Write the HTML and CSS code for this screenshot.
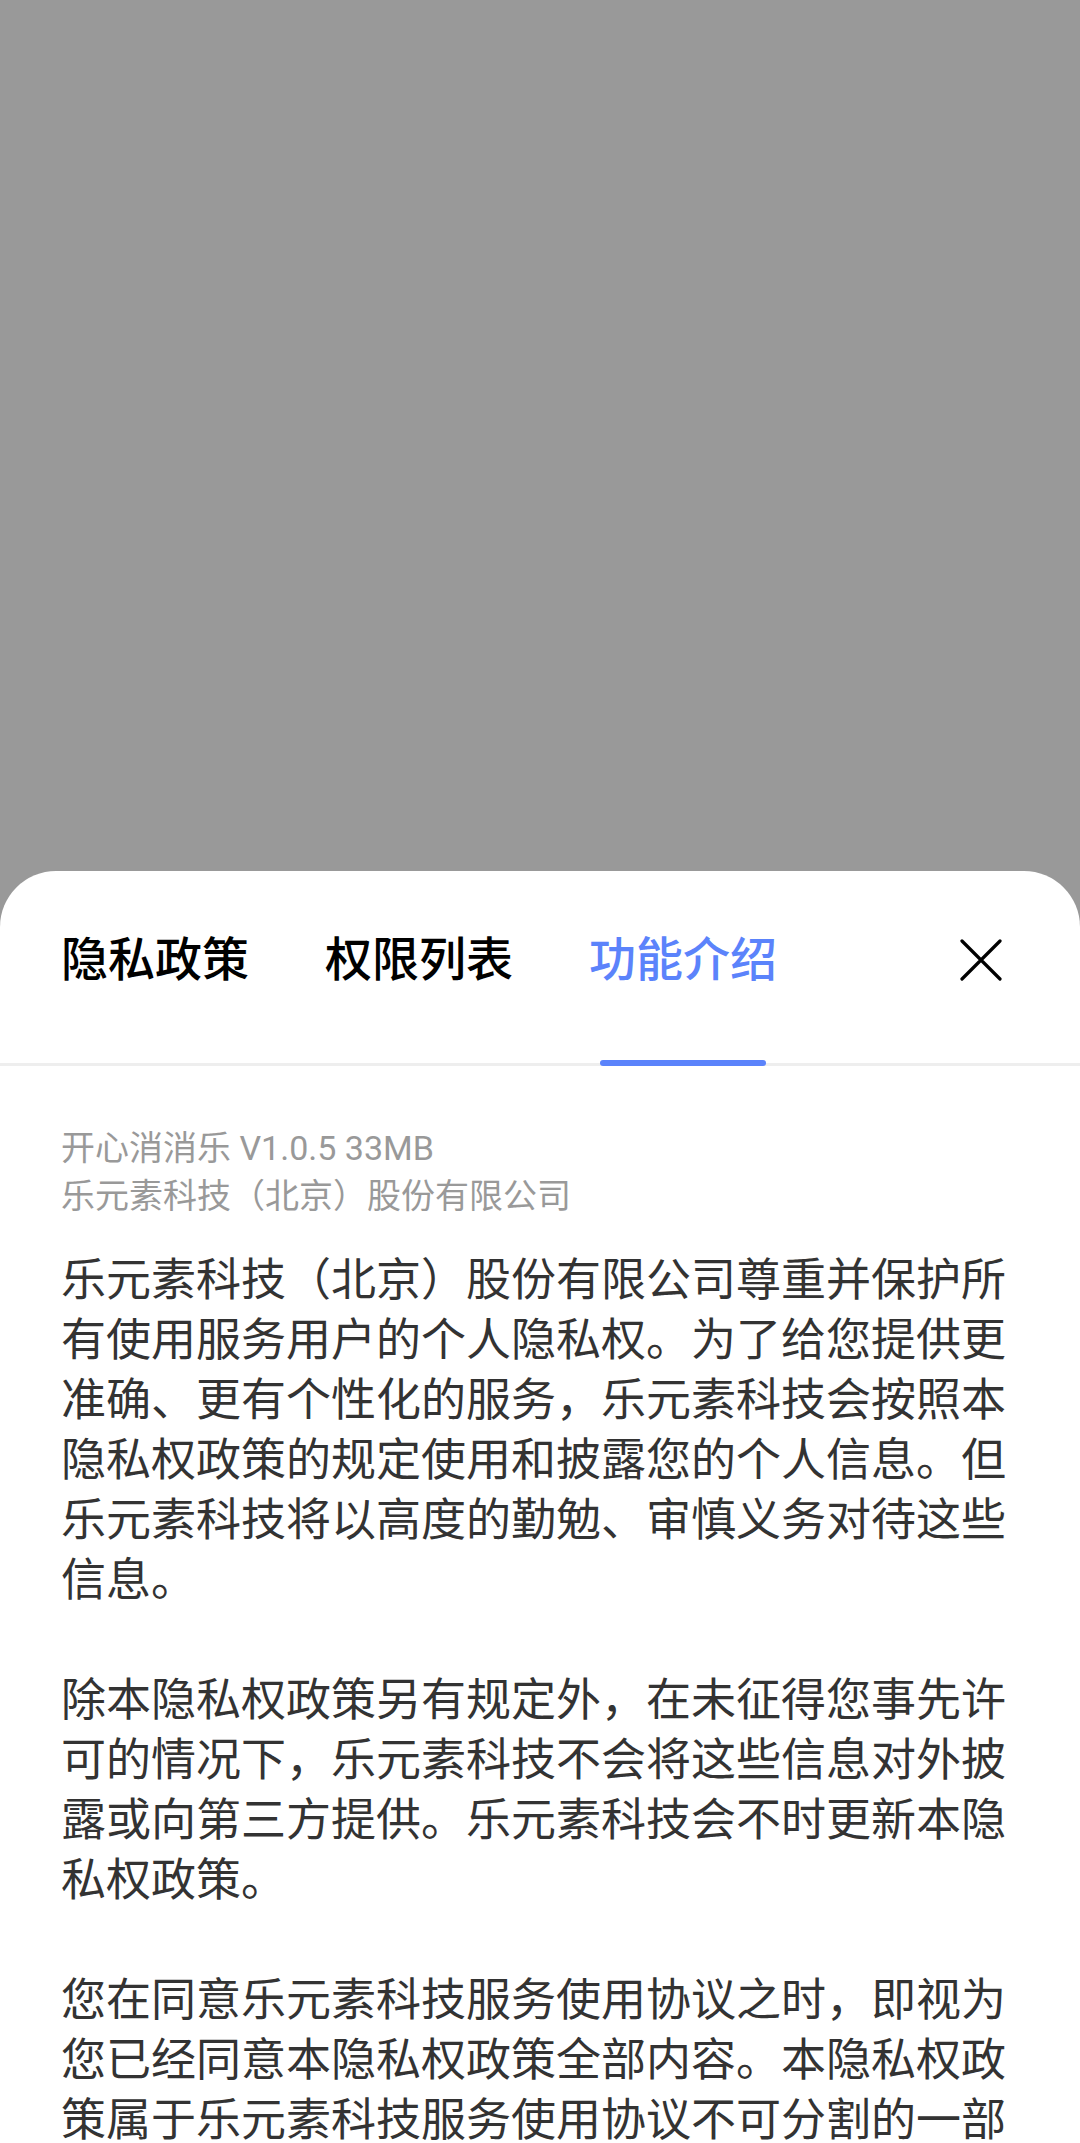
FILE: index.html
```html
<!DOCTYPE html>
<html lang="zh-CN">
<head>
  <meta charset="UTF-8">
  <meta name="viewport" content="width=device-width, initial-scale=1.0">
  <title>功能介绍</title>
  <link rel="stylesheet" href="styles.css">
</head>
<body>
  <div class="backdrop"></div>

  <div class="sheet">
    <div class="tab-bar">
      <div class="tab">隐私政策</div>
      <div class="tab">权限列表</div>
      <div class="tab active">功能介绍</div>
      <button class="close-btn" aria-label="关闭">
        <svg width="42" height="42" viewBox="0 0 42 42">
          <path d="M2 2 L40 40 M40 2 L2 40" stroke="#000" stroke-width="3.2" stroke-linecap="round" fill="none"/>
        </svg>
      </button>
    </div>

    <div class="content">
      <div class="app-info">
        <div>开心消消乐 V1.0.5 33MB</div>
        <div>乐元素科技（北京）股份有限公司</div>
      </div>

      <div class="policy">
        <p>乐元素科技（北京）股份有限公司尊重并保护所有使用服务用户的个人隐私权。为了给您提供更准确、更有个性化的服务，乐元素科技会按照本隐私权政策的规定使用和披露您的个人信息。但乐元素科技将以高度的勤勉、审慎义务对待这些信息。</p>
        <p>除本隐私权政策另有规定外，在未征得您事先许可的情况下，乐元素科技不会将这些信息对外披露或向第三方提供。乐元素科技会不时更新本隐私权政策。</p>
        <p>您在同意乐元素科技服务使用协议之时，即视为您已经同意本隐私权政策全部内容。本隐私权政策属于乐元素科技服务使用协议不可分割的一部分。</p>
      </div>
    </div>
  </div>
</body>
</html>
```

FILE: styles.css
```css
/* Page: dimmed backdrop with a bottom sheet */
body {
  margin: 0;
  padding: 0;
  height: 100vh;
  overflow: hidden;
  display: flex;
  flex-direction: column;
  background-color: #999999;
  font-family: Roboto, "Noto Sans CJK SC", sans-serif;
  color: #333;
}

.backdrop {
  flex: 0 0 871px;
}

/* Bottom sheet */
.sheet {
  flex: 1;
  background: #fff;
  border-radius: 56px 56px 0 0;
  overflow: hidden;
}

/* Tabs */
.tab-bar {
  height: 195px;
  display: flex;
  align-items: flex-start;
  gap: 76px;
  padding: 60px 78px 0 61px;
  border-bottom: 3px solid #eeeeee;
  box-sizing: border-box;
}

.tab {
  position: relative;
  height: 132px;
  font-size: 47px;
  line-height: 58px;
  font-weight: 500;
  color: #000;
}

.tab.active {
  color: #5b83fb;
}

/* Active tab underline sits on the divider */
.tab.active::after {
  content: "";
  position: absolute;
  left: 11px;
  right: 11px;
  bottom: -3px;
  height: 6px;
  border-radius: 3px;
  background-color: #5b83fb;
}

.close-btn {
  margin-left: auto;
  margin-top: 8px;
  width: 42px;
  height: 42px;
  padding: 0;
  border: none;
  background: none;
  cursor: pointer;
}

.close-btn svg {
  display: block;
}

/* Content */
.content {
  padding: 58px 60px 0 61px;
}

.app-info {
  font-size: 34px;
  line-height: 48px;
  color: #999999;
}

.policy {
  margin-top: 31px;
  width: 950px;
  font-size: 45px;
  line-height: 60px;
  color: #333333;
}

.policy p {
  margin: 0 0 60px;
}
```
